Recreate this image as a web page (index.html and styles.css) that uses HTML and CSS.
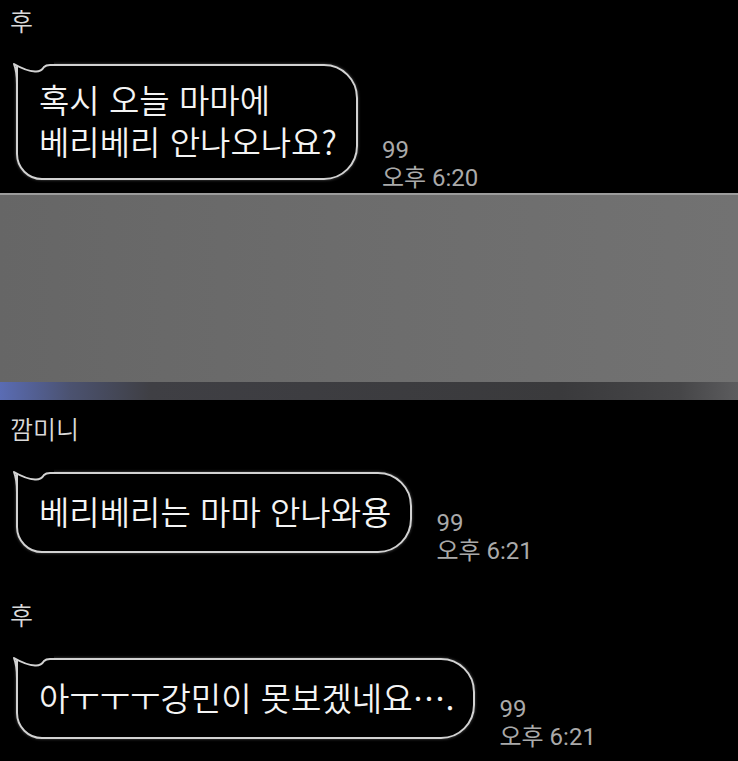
FILE: index.html
```html
<!DOCTYPE html>
<html lang="ko">
<head>
    <meta charset="UTF-8">
    <meta name="viewport" content="width=device-width, initial-scale=1.0">
    <title>채팅</title>
    <link rel="stylesheet" href="styles.css">
</head>
<body>
    <div class="chat">
        <div class="group">
            <div class="sender">후</div>
            <div class="row">
                <div class="bubble">
                    <svg class="tail" width="40" height="20" viewBox="0 0 40 20"><path class="tail-fill" d="M-2 0Q10 7 19 7.5Q25 8 28 3Q30 1 34 1L38 1L38-4L-2-4Z"/><path class="tail-line" d="M1 20Q1 8-2 0Q10 7 19 7.5Q25 8 28 3Q30 1 34 1L38 1"/></svg>
                    <p>혹시 오늘 마마에<br>베리베리 안나오나요?</p>
                </div>
                <div class="meta"><span>99</span><span>오후 6:20</span></div>
            </div>
        </div>

        <div class="photo"><div class="photo-edge"></div></div>

        <div class="group">
            <div class="sender">깜미니</div>
            <div class="row">
                <div class="bubble">
                    <svg class="tail" width="40" height="20" viewBox="0 0 40 20"><path class="tail-fill" d="M-2 0Q10 7 19 7.5Q25 8 28 3Q30 1 34 1L38 1L38-4L-2-4Z"/><path class="tail-line" d="M1 20Q1 8-2 0Q10 7 19 7.5Q25 8 28 3Q30 1 34 1L38 1"/></svg>
                    <p>베리베리는 마마 안나와용</p>
                </div>
                <div class="meta"><span>99</span><span>오후 6:21</span></div>
            </div>
        </div>

        <div class="group">
            <div class="sender">후</div>
            <div class="row">
                <div class="bubble">
                    <svg class="tail" width="40" height="20" viewBox="0 0 40 20"><path class="tail-fill" d="M-2 0Q10 7 19 7.5Q25 8 28 3Q30 1 34 1L38 1L38-4L-2-4Z"/><path class="tail-line" d="M1 20Q1 8-2 0Q10 7 19 7.5Q25 8 28 3Q30 1 34 1L38 1"/></svg>
                    <p>아ㅜㅜㅜ강민이 못보겠네요….</p>
                </div>
                <div class="meta"><span>99</span><span>오후 6:21</span></div>
            </div>
        </div>
    </div>
</body>
</html>
```

FILE: styles.css
```css
/* Page */
body {
    margin: 0;
    background: #000;
    font-family: "Noto Sans CJK KR", sans-serif;
    color: #f4f4f4;
}

.chat {
    padding: 5px 0 30px;
}

.group + .group {
    margin-top: 46px;
}

/* Sender name */
.sender {
    padding-left: 10px;
    margin-bottom: 29px;
    font-size: 25px;
    font-weight: 350;
    line-height: 30px;
    color: #dadada;
}

/* Message row */
.row {
    display: flex;
    align-items: flex-end;
    gap: 24px;
    padding-left: 16px;
}

.bubble {
    position: relative;
    display: flex;
    align-items: center;
    box-sizing: border-box;
    min-height: 81px;
    padding: 12px 19px 16px 21px;
    border: 2px solid #d2d2d2;
    border-radius: 0 34px 34px 26px;
    box-shadow: 0 0 3px rgba(255, 255, 255, 0.35);
    font-size: 33px;
    font-weight: 350;
    line-height: 42px;
}

.bubble p {
    margin: 0;
    white-space: nowrap;
}

/* tail notch on the top left corner */
.tail {
    position: absolute;
    top: -2px;
    left: -2px;
    overflow: visible;
}

.tail-fill {
    fill: #000;
}

.tail-line {
    fill: none;
    stroke: #d2d2d2;
    stroke-width: 2;
    stroke-linejoin: round;
}

.meta {
    display: flex;
    flex-direction: column;
    margin-bottom: -12px;
    font-family: Roboto, "Noto Sans CJK KR", sans-serif;
    font-size: 24px;
    line-height: 28px;
    color: #aaa;
}

/* Shared photo */
.photo {
    display: flex;
    flex-direction: column;
    justify-content: flex-end;
    height: 207px;
    margin: 13px 0 13px;
    box-sizing: border-box;
    border-top: 2px solid #9c9c9c;
    background: linear-gradient(90deg, #666 0%, #6c6c6c 45%, #727272 100%);
}

.photo-edge {
    height: 18px;
    background: linear-gradient(90deg, #5a6cb4 0, #4b5270 70px, #3f3f44 150px, #3a3a3c 560px, #464648 680px, #5c5c5e 738px);
}
```
